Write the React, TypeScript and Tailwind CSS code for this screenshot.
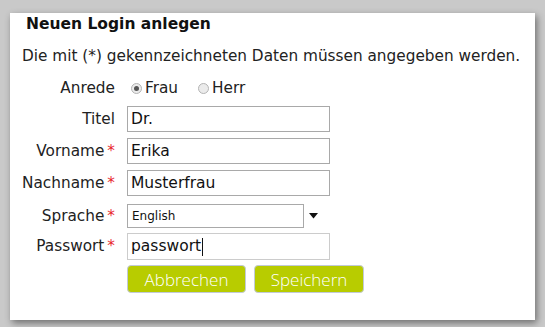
import React from "react";

const font = { fontFamily: '"DejaVu Sans", Verdana, sans-serif' };

function Label({ text, required }: { text: string; required?: boolean }) {
  return (
    <div className="w-[106px] shrink-0 text-right text-[15.3px] text-[#222] pr-[1px]">
      {text}
      {required && <span className="text-[#e8262b] ml-[3px]">*</span>}
    </div>
  );
}

function Radio({ checked, label }: { checked?: boolean; label: string }) {
  return (
    <span className="flex items-center">
      <span className="flex h-[11px] w-[11px] items-center justify-center rounded-full border border-[#b4b4b4] bg-[#ebebeb]">
        {checked && <span className="h-[5px] w-[5px] rounded-full bg-[#555]" />}
      </span>
      <span className="ml-[3px]">{label}</span>
    </span>
  );
}

export default function App() {
  return (
    <div className="h-[327px] w-[545px] bg-[#c9c9c9] p-[10px]" style={font}>
      <div className="h-[307px] w-[525px] bg-white shadow-[2px_3px_7px_rgba(0,0,0,0.45)]">
        <div className="mt-[3px] flex h-[24px] items-center pl-[16px] text-[15.5px] font-bold text-[#111]">
          Neuen Login anlegen
        </div>
        <div className="mt-[7px] h-[24px] pl-[12px] text-[15.3px] leading-[24px] text-[#222]">
          Die mit (*) gekennzeichneten Daten müssen angegeben werden.
        </div>

        <div className="mt-[9px] flex h-[22px] items-center">
          <Label text="Anrede" />
          <div className="ml-[15px] flex items-center gap-[20px] text-[15.3px] text-[#222]">
            <Radio checked label="Frau" />
            <Radio label="Herr" />
          </div>
        </div>

        <div className="mt-[7px] flex items-center">
          <Label text="Titel" />
          <input
            defaultValue="Dr."
            className="ml-[11px] h-[26px] w-[203px] border border-[#a9a9a9] px-[3px] text-[15.5px] text-[#111] outline-none"
          />
        </div>
        <div className="mt-[6px] flex items-center">
          <Label text="Vorname" required />
          <input
            defaultValue="Erika"
            className="ml-[11px] h-[26px] w-[203px] border border-[#a9a9a9] px-[3px] text-[15.5px] text-[#111] outline-none"
          />
        </div>
        <div className="mt-[6px] flex items-center">
          <Label text="Nachname" required />
          <input
            defaultValue="Musterfrau"
            className="ml-[11px] h-[26px] w-[203px] border border-[#a9a9a9] px-[3px] text-[15.5px] text-[#111] outline-none"
          />
        </div>

        <div className="mt-[8px] flex items-center">
          <Label text="Sprache" required />
          <div className="ml-[11px] flex h-[24px] w-[177px] items-center border border-[#a9a9a9] pl-[4px] text-[12px] text-[#111]">
            English
          </div>
          <svg width="9" height="6" viewBox="0 0 9 6" className="ml-[5px]">
            <path d="M0 0h9L4.5 5.5z" fill="#111" />
          </svg>
        </div>

        <div className="mt-[5px] flex items-center">
          <Label text="Passwort" required />
          <div className="ml-[11px] flex h-[27px] w-[203px] items-center border border-[#cccccc] px-[3px] text-[15.5px] text-[#111]">
            passwort
            <span className="ml-[1px] h-[18px] w-[1px] bg-[#111]" />
          </div>
        </div>

        <div
          className="mt-[5px] flex items-center pl-[117px] gap-[8px] text-[17px] font-light text-white"
          style={{ fontFamily: '"Open Sans", sans-serif' }}
        >
          <button className="h-[28px] w-[119px] rounded-[4px] border border-[#c2cad8] bg-[#b8cc00] leading-none">
            Abbrechen
          </button>
          <button className="h-[28px] w-[110px] rounded-[4px] border border-[#c2cad8] bg-[#b8cc00] leading-none">
            Speichern
          </button>
        </div>
      </div>
    </div>
  );
}
